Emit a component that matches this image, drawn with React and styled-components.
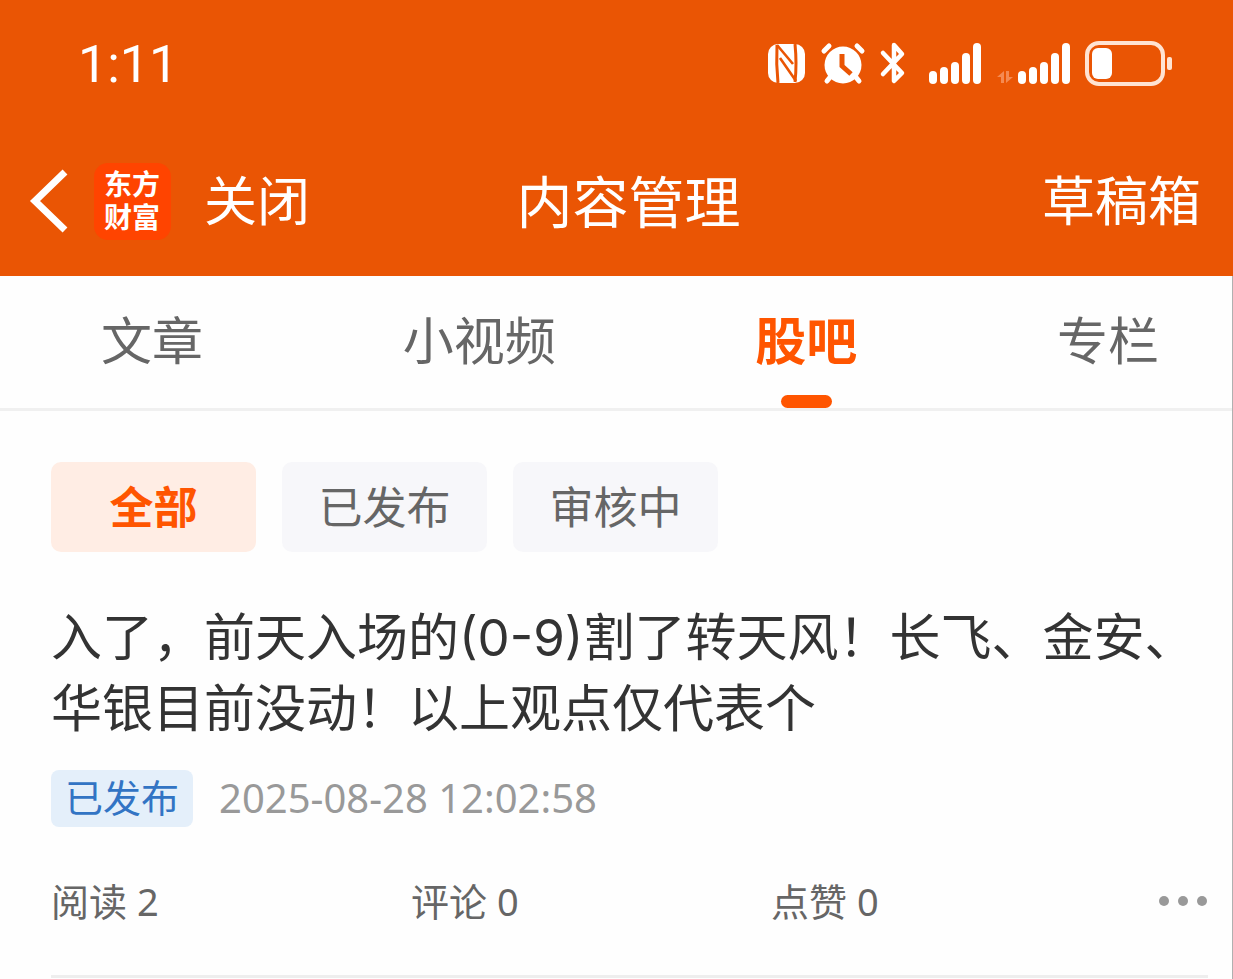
import React from "react";
import styled, { createGlobalStyle } from "styled-components";

const GlobalStyle = createGlobalStyle`
  * { box-sizing: border-box; }
  body {
    margin: 0;
    background: #fefefe;
    color: #333;
    font-family: "Noto Sans", "Noto Sans CJK SC", sans-serif;
  }
  button, a { font: inherit; color: inherit; text-decoration: none; }
  button { border: 0; padding: 0; background: none; cursor: pointer; }
  h1, h2, p, ul, dl, dd { margin: 0; padding: 0; font-weight: 400; }
`;

const Page = styled.div`
  min-height: 100vh;
  border-right: 1px solid #b0b0b0;
`;

const Header = styled.header`
  background: #ea5504;
  color: #fff;
  height: 276px;
  margin-right: -1px;
`;

const StatusBar = styled.div`
  display: flex;
  align-items: center;
  justify-content: space-between;
  height: 128px;
  padding: 0 60px 0 78px;
`;

const Clock = styled.time`
  padding-top: 2px;
  font-family: Roboto, "Noto Sans", sans-serif;
  font-size: 52px;
  line-height: 72px;
`;

const StatusIcons = styled.svg`
  display: block;
  width: 408px;
  height: 48px;
`;

const NavBar = styled.nav`
  display: grid;
  grid-template-columns: 1fr auto 1fr;
  align-items: center;
  height: 146px;
  padding: 0 32px 0 28px;
`;

const NavLeft = styled.div`
  display: flex;
  align-items: center;
`;

const BackButton = styled.button`
  display: flex;
  width: 66px;
  height: 64px;
`;

const Logo = styled.a`
  width: 77px;
  height: 77px;
  margin-right: 33px;
  padding: 4px 10px;
  border-radius: 14px;
  background: #ff4400;
  font-family: "Noto Sans CJK SC", sans-serif;
  font-size: 28px;
  font-weight: 700;
  line-height: 33px;
`;

const NavLink = styled.button`
  font-size: 53px;
  line-height: 72px;
  justify-self: ${(p) => (p.$end ? "end" : "auto")};
`;

const NavTitle = styled.h1`
  padding-left: 28px;
  font-size: 56px;
  line-height: 72px;
`;

const Tabs = styled.ul`
  display: flex;
  justify-content: space-between;
  height: 135px;
  padding: 0 73px 0 101px;
  border-bottom: 3px solid #f0f0f0;
  list-style: none;
`;

const Tab = styled.button`
  display: flex;
  flex-direction: column;
  align-items: center;
  justify-content: space-between;
  height: 132px;
  padding-top: 28px;
  font-size: 51px;
  line-height: 72px;
  font-weight: ${(p) => (p.$active ? 700 : 400)};
  color: ${(p) => (p.$active ? "#ff5500" : "#666")};

  &::after {
    content: "";
    width: 51px;
    height: 13px;
    border-radius: 7px;
    background: ${(p) => (p.$active ? "#ff5500" : "transparent")};
  }
`;

const Main = styled.main`
  padding: 51px 24px 0 51px;
`;

const Filters = styled.div`
  display: flex;
  gap: 26px;
  margin-bottom: 50px;
`;

const Chip = styled.button`
  width: 205px;
  height: 90px;
  border-radius: 10px;
  font-size: 44px;
  line-height: 88px;
  font-weight: ${(p) => (p.$active ? 700 : 400)};
  color: ${(p) => (p.$active ? "#ff5500" : "#666")};
  background: ${(p) => (p.$active ? "#ffede4" : "#f7f7fa")};
`;

const Post = styled.article`
  border-bottom: 3px solid #eee;
`;

const PostTitle = styled.h2`
  font-family: Inter, "Noto Sans CJK SC", sans-serif;
  font-size: 51px;
  line-height: 71px;
`;

const Meta = styled.div`
  display: flex;
  align-items: center;
  gap: 26px;
  margin-top: 26px;
`;

const Badge = styled.span`
  height: 57px;
  padding: 0 14px;
  border-radius: 8px;
  background: #e4effa;
  color: #3274c4;
  font-size: 38px;
  line-height: 55px;
`;

const PostDate = styled.time`
  height: 57px;
  color: #999;
  font-size: 40px;
  line-height: 55px;
`;

const PostFooter = styled.div`
  display: flex;
  align-items: center;
  justify-content: space-between;
  height: 148px;
`;

const Stats = styled.ul`
  display: flex;
  list-style: none;
`;

const Stat = styled.li`
  width: 360px;
  color: #666;
  font-size: 38px;
  line-height: 56px;
`;

const MoreButton = styled.button`
  display: flex;
  width: 50px;
  height: 12px;
`;

const tabs = ["文章", "小视频", "股吧", "专栏"];
const filters = ["全部", "已发布", "审核中"];
const stats = [["阅读", 2], ["评论", 0], ["点赞", 0]];

function Signal({ x }) {
  const tops = [31, 27, 22, 13, 3];
  return tops.map((top, i) => (
    <rect key={top} x={x + i * 11} y={top} width="8" height={44 - top} rx="4" fill="#fff" />
  ));
}

function StatusGlyphs() {
  return (
    <StatusIcons viewBox="0 0 408 48" role="img" aria-label="NFC、闹钟、蓝牙、信号、电池">
      <g>
        <rect x="3" y="4" width="37" height="39" rx="10" fill="#fff" />
        <path
          d="M13 43Q11 24 12 5M30 42Q32 24 30 4"
          fill="none"
          stroke="#ea5504"
          strokeWidth="3"
        />
        <path
          d="M12 5L28 24M15 18L31 41"
          fill="none"
          stroke="#ea5504"
          strokeWidth="2.6"
        />
      </g>
      <g fill="none" stroke="#fff" strokeWidth="5" strokeLinecap="round">
        <circle cx="78" cy="25" r="18.5" fill="#fff" stroke="none" />
        <path d="M59 11L64 6M97 11L92 6M66 36L62 41M90 36L94 41" />
        <path d="M77 14V26L86 34" stroke="#ea5504" strokeWidth="5" strokeLinecap="butt" />
      </g>
      <path
        d="M118 13L137 33L129 41V5L137 14L118 34"
        fill="none"
        stroke="#fff"
        strokeWidth="4.5"
        strokeLinecap="round"
        strokeLinejoin="round"
      />
      <Signal x={164} />
      <path d="M232 37L239 31V43H236V37ZM241 31H244V37H248L241 43Z" fill="#f58a52" />
      <Signal x={253} />
      <rect x="322" y="3" width="76" height="41" rx="12" fill="none" stroke="#ffe3d2" strokeWidth="4" />
      <rect x="327" y="8" width="20" height="31" rx="6" fill="#fff" />
      <rect x="402" y="17" width="5" height="13" rx="2" fill="#ffe3d2" />
    </StatusIcons>
  );
}

export default function App() {
  return (
    <Page>
      <GlobalStyle />
      <Header>
        <StatusBar>
          <Clock>1:11</Clock>
          <StatusGlyphs />
        </StatusBar>
        <NavBar>
          <NavLeft>
            <BackButton aria-label="返回">
              <svg width="42" height="64" viewBox="0 0 42 64" fill="none" stroke="#fff" strokeWidth="7">
                <path d="M37 3L7 32L37 61" />
              </svg>
            </BackButton>
            <Logo href="#home">东方财富</Logo>
            <NavLink>关闭</NavLink>
          </NavLeft>
          <NavTitle>内容管理</NavTitle>
          <NavLink $end>草稿箱</NavLink>
        </NavBar>
      </Header>
      <Tabs>
        {tabs.map((name) => (
          <li key={name}>
            <Tab $active={name === "股吧"}>{name}</Tab>
          </li>
        ))}
      </Tabs>
      <Main>
        <Filters>
          {filters.map((name) => (
            <Chip key={name} $active={name === "全部"}>{name}</Chip>
          ))}
        </Filters>
        <Post>
          <PostTitle>
            入了，前天入场的(0-9)割了转天风！长飞、金安、华银目前没动！以上观点仅代表个
          </PostTitle>
          <Meta>
            <Badge>已发布</Badge>
            <PostDate>2025-08-28 12:02:58</PostDate>
          </Meta>
          <PostFooter>
            <Stats>
              {stats.map(([label, count]) => (
                <Stat key={label}>{label} {count}</Stat>
              ))}
            </Stats>
            <MoreButton aria-label="更多">
              <svg width="50" height="12" viewBox="0 0 50 12" fill="#999">
                <circle cx="6" cy="6" r="5" />
                <circle cx="25" cy="6" r="5" />
                <circle cx="44" cy="6" r="5" />
              </svg>
            </MoreButton>
          </PostFooter>
        </Post>
      </Main>
    </Page>
  );
}
